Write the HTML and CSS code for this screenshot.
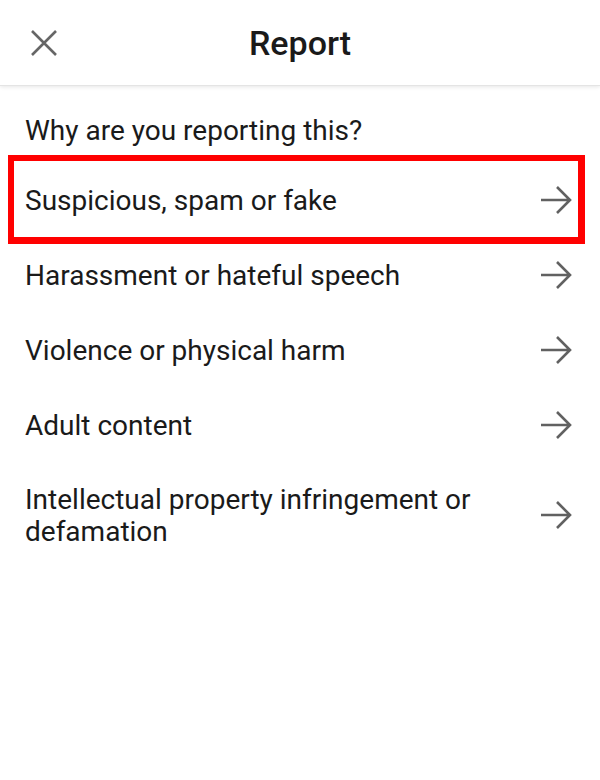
FILE: index.html
```
<!DOCTYPE html>
<html>
<head>
<meta charset="utf-8">
<link rel="stylesheet" href="styles.css">
</head>
<body>
<div class="header">
  <div class="close">
    <svg width="28" height="26" viewBox="0 0 28 26"><path d="M2 1L26 25M26 1L2 25" stroke="#666" stroke-width="2.6" fill="none"/></svg>
  </div>
  <div class="title">Report</div>
</div>
<div class="content">
  <div class="question">Why are you reporting this?</div>
  <div class="row highlighted">
    <div class="label">Suspicious, spam or fake</div>
    <svg class="arrow" width="32" height="30" viewBox="0 0 32 30"><path d="M1 15H30M17 2L30 15L17 28" stroke="#616161" stroke-width="2.6" fill="none"/></svg>
  </div>
  <div class="row">
    <div class="label">Harassment or hateful speech</div>
    <svg class="arrow" width="32" height="30" viewBox="0 0 32 30"><path d="M1 15H30M17 2L30 15L17 28" stroke="#616161" stroke-width="2.6" fill="none"/></svg>
  </div>
  <div class="row">
    <div class="label">Violence or physical harm</div>
    <svg class="arrow" width="32" height="30" viewBox="0 0 32 30"><path d="M1 15H30M17 2L30 15L17 28" stroke="#616161" stroke-width="2.6" fill="none"/></svg>
  </div>
  <div class="row">
    <div class="label">Adult content</div>
    <svg class="arrow" width="32" height="30" viewBox="0 0 32 30"><path d="M1 15H30M17 2L30 15L17 28" stroke="#616161" stroke-width="2.6" fill="none"/></svg>
  </div>
  <div class="row tall">
    <div class="label">Intellectual property infringement or defamation</div>
    <svg class="arrow" width="32" height="30" viewBox="0 0 32 30"><path d="M1 15H30M17 2L30 15L17 28" stroke="#616161" stroke-width="2.6" fill="none"/></svg>
  </div>
</div>
</body>
</html>
```
FILE: styles.css
```
html, body {
  margin: 0;
  padding: 0;
  background: #fff;
  font-family: Roboto, "Noto Sans", sans-serif;
  color: #1a1a1a;
}
.header {
  position: relative;
  height: 85px;
  display: flex;
  align-items: center;
  justify-content: center;
  box-shadow: 0 1px 4px rgba(0,0,0,0.10);
  border-bottom: 1px solid #e4e4e4;
}
.close {
  position: absolute;
  left: 30px;
  top: 30px;
  line-height: 0;
}
.title {
  font-size: 34px;
  font-weight: 500;
  color: #1a1a1a;
}
.content {
  padding: 21px 0 0 0;
}
.question {
  font-size: 28px;
  padding: 0 25px;
  height: 48px;
  line-height: 48px;
}
.row {
  display: flex;
  align-items: center;
  justify-content: space-between;
  height: 75px;
  padding: 0 28px 0 25px;
  font-size: 28px;
  box-sizing: border-box;
}
.row.highlighted {
  margin: 0 15px -7px 8px;
  height: 89px;
  border: 6px solid #f00;
  border-right-width: 7px;
  border-bottom-width: 7px;
  padding: 2px 6px 0 11px;
}
.row .label {
  position: relative;
  top: 1px;
}
.row.tall {
  height: 106px;
}
.label {
  line-height: 32px;
  max-width: 470px;
}
.arrow {
  flex-shrink: 0;
}
```
